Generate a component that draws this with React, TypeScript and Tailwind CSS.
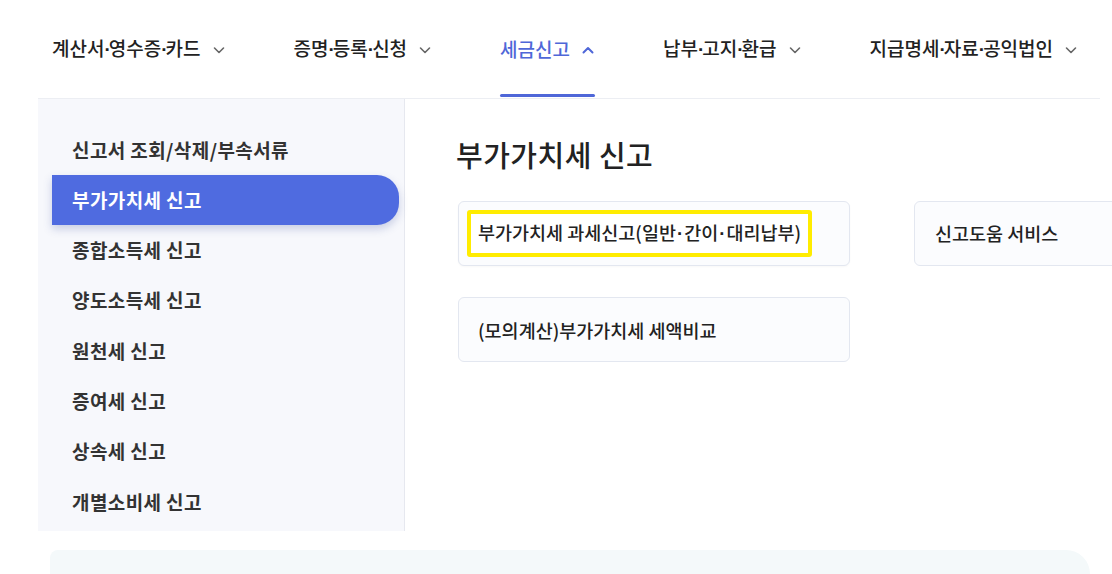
import React from "react";

const font = { fontFamily: '"Noto Sans CJK KR", "Noto Sans", sans-serif' };
const dotFont = { fontFamily: '"Liberation Sans", Arial, sans-serif' };

function Chevron({ up = false, color = "#555" }: { up?: boolean; color?: string }) {
  return (
    <svg width="14" height="14" viewBox="0 0 14 14" fill="none" className="ml-[11px] mt-[2px] shrink-0">
      {up ? (
        <path d="M2.5 9.5 L7 5 L11.5 9.5" stroke={color} strokeWidth="2" strokeLinecap="round" strokeLinejoin="round" />
      ) : (
        <path d="M2.5 5 L7 9.5 L11.5 5" stroke={color} strokeWidth="1.6" strokeLinecap="round" strokeLinejoin="round" />
      )}
    </svg>
  );
}

function Dotted({ text, dotClass }: { text: string; dotClass: string }) {
  const parts = text.split("·");
  return (
    <>
      {parts.map((p, i) => (
        <React.Fragment key={i}>
          {i > 0 && (
            <span className={dotClass} style={dotFont}>
              ·
            </span>
          )}
          {p}
        </React.Fragment>
      ))}
    </>
  );
}

const navItems = [
  { label: "계산서·영수증·카드", active: false },
  { label: "증명·등록·신청", active: false },
  { label: "세금신고", active: true },
  { label: "납부·고지·환급", active: false },
  { label: "지급명세·자료·공익법인", active: false },
];

const sideItems = [
  "신고서 조회/삭제/부속서류",
  "부가가치세 신고",
  "종합소득세 신고",
  "양도소득세 신고",
  "원천세 신고",
  "증여세 신고",
  "상속세 신고",
  "개별소비세 신고",
];

export default function App() {
  return (
    <div className="w-[1112px] h-[574px] bg-white overflow-hidden relative" style={font}>
      {/* Top nav */}
      <div className="flex h-[98px] pl-[52px] gap-[68px] items-stretch">
        {navItems.map((n) => (
          <div key={n.label} className="relative flex items-center shrink-0">
            <span
              className={`text-[19px] font-medium whitespace-nowrap ${n.active ? "text-[#4f67d8]" : "text-[#222]"}`}
            >
              <Dotted text={n.label} dotClass="font-bold tracking-[-2px]" />
            </span>
            <Chevron up={n.active} color={n.active ? "#4f67d8" : "#666"} />
            {n.active && (
              <div className="absolute left-0 right-0 bottom-[1px] h-[3px] rounded-full bg-[#4f67d8]" />
            )}
          </div>
        ))}
      </div>

      <div className="flex ml-[38px] mr-[12px] border-t border-[#eceef3]">
        {/* Sidebar */}
        <div className="w-[367px] shrink-0 h-[432px] bg-[#f7f8fc] border-r border-[#e6e8ef] pt-[26px]">
          {sideItems.map((s, i) =>
            i === 1 ? (
              <div
                key={s}
                className="ml-[14px] mr-[5px] h-[50px] flex items-center pl-[20px] bg-[#4f6be0] rounded-r-[22px] shadow-[0_4px_8px_rgba(60,80,160,0.25)]"
              >
                <span className="text-[19px] font-bold text-white tracking-[0.4px] whitespace-nowrap">{s}</span>
              </div>
            ) : (
              <div key={s} className="h-[50.3px] flex items-center pl-[34px]">
                <span className="text-[19px] font-bold text-[#333] tracking-[0.4px] whitespace-nowrap">{s}</span>
              </div>
            )
          )}
        </div>

        {/* Content */}
        <div className="flex-1 min-w-0 pl-[53px] pt-[34px]">
          <h1 className="text-[29px] font-medium text-[#222] tracking-[0.5px] leading-[42px] -ml-[2px] whitespace-nowrap">
            부가가치세 신고
          </h1>
          <div className="mt-[26px] grid grid-cols-[392px_392px] gap-x-[64px] gap-y-[31px]">
            <div className="h-[65px] rounded-[6px] border border-[#e3e7f0] bg-[#fbfcfe] shadow-[0_1px_2px_rgba(0,0,0,0.03)] flex items-center pl-[8px]">
              <div className="h-[47px] w-[345px] border-[4px] border-[#ffec00] rounded-[3px] bg-white flex items-center pl-[7px]">
                <span className="text-[18.5px] font-medium text-[#222] whitespace-nowrap">
                  <Dotted text="부가가치세 과세신고(일반·간이·대리납부)" dotClass="font-bold px-[1px]" />
                </span>
              </div>
            </div>
            <div className="h-[65px] rounded-[6px] border border-[#e3e7f0] bg-[#fbfcfe] flex items-center pl-[20px]">
              <span className="text-[18.5px] font-medium text-[#222] whitespace-nowrap">신고도움 서비스</span>
            </div>
            <div className="h-[65px] rounded-[6px] border border-[#e3e7f0] bg-[#fbfcfe] flex items-center pl-[19px] pt-[2px]">
              <span className="text-[18.5px] font-medium text-[#222] whitespace-nowrap">
                (모의계산)부가가치세 세액비교
              </span>
            </div>
          </div>
        </div>
      </div>

      {/* Bottom box */}
      <div className="ml-[50px] mr-[22px] mt-[19px] h-[40px] bg-[#f4f9fa] rounded-tl-[8px] rounded-tr-[24px]" />
    </div>
  );
}
